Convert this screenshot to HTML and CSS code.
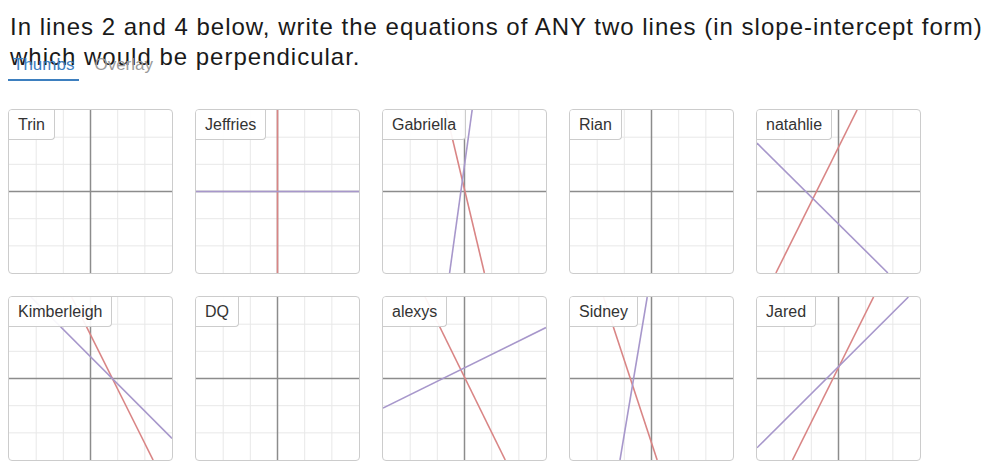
FILE: index.html
```html
<!DOCTYPE html>
<html>
<head>
<meta charset="utf-8">
<link rel="stylesheet" href="styles.css">
</head>
<body>
<svg class="defs" width="0" height="0" aria-hidden="true">
  <defs>
    <symbol id="grid" viewBox="0 0 164 164">
      <g class="gridlines">
        <line x1="27.33" y1="0" x2="27.33" y2="164"/>
        <line x1="54.67" y1="0" x2="54.67" y2="164"/>
        <line x1="109.33" y1="0" x2="109.33" y2="164"/>
        <line x1="136.67" y1="0" x2="136.67" y2="164"/>
        <line x1="0" y1="27.33" x2="164" y2="27.33"/>
        <line x1="0" y1="54.67" x2="164" y2="54.67"/>
        <line x1="0" y1="109.33" x2="164" y2="109.33"/>
        <line x1="0" y1="136.67" x2="164" y2="136.67"/>
      </g>
      <g class="axes">
        <line x1="82" y1="0" x2="82" y2="164"/>
        <line x1="0" y1="82" x2="164" y2="82"/>
      </g>
    </symbol>
  </defs>
</svg>

<div class="prompt">In lines 2 and 4 below, write the equations of ANY two lines (in slope-intercept form) which would be perpendicular.</div>

<div class="tabs">
  <span class="tab active">Thumbs</span>
  <span class="tab">Overlay</span>
</div>

<div class="cards">
  <div class="card">
    <svg class="plot" viewBox="0 0 164 164"><use href="#grid"/></svg>
    <div class="label">Trin</div>
  </div>
  <div class="card">
    <svg class="plot" viewBox="0 0 164 164"><use href="#grid"/>
      <line class="red" x1="82" y1="0" x2="82" y2="164"/>
      <line class="purple" x1="0" y1="82" x2="164" y2="82"/>
    </svg>
    <div class="label">Jeffries</div>
  </div>
  <div class="card">
    <svg class="plot" viewBox="0 0 164 164"><use href="#grid"/>
      <line class="red" x1="63" y1="0" x2="102" y2="164"/>
      <line class="purple" x1="89.7" y1="0" x2="67" y2="164"/>
    </svg>
    <div class="label">Gabriella</div>
  </div>
  <div class="card">
    <svg class="plot" viewBox="0 0 164 164"><use href="#grid"/></svg>
    <div class="label">Rian</div>
  </div>
  <div class="card">
    <svg class="plot" viewBox="0 0 164 164"><use href="#grid"/>
      <line class="red" x1="100.7" y1="0" x2="19" y2="164"/>
      <line class="purple" x1="0" y1="33.3" x2="131.7" y2="164"/>
    </svg>
    <div class="label">natahlie</div>
  </div>

  <div class="card">
    <svg class="plot" viewBox="0 0 164 164"><use href="#grid"/>
      <line class="red" x1="63" y1="0" x2="145" y2="164"/>
      <line class="purple" x1="22" y1="0" x2="164" y2="142.3"/>
    </svg>
    <div class="label">Kimberleigh</div>
  </div>
  <div class="card">
    <svg class="plot" viewBox="0 0 164 164"><use href="#grid"/></svg>
    <div class="label">DQ</div>
  </div>
  <div class="card">
    <svg class="plot" viewBox="0 0 164 164"><use href="#grid"/>
      <line class="red" x1="42.3" y1="0" x2="123" y2="164"/>
      <line class="purple" x1="0" y1="111.7" x2="164" y2="30.7"/>
    </svg>
    <div class="label">alexys</div>
  </div>
  <div class="card">
    <svg class="plot" viewBox="0 0 164 164"><use href="#grid"/>
      <line class="red" x1="33.7" y1="0" x2="87.7" y2="164"/>
      <line class="purple" x1="77.7" y1="0" x2="50.3" y2="164"/>
    </svg>
    <div class="label">Sidney</div>
  </div>
  <div class="card">
    <svg class="plot" viewBox="0 0 164 164"><use href="#grid"/>
      <line class="red" x1="117.3" y1="0" x2="35.7" y2="164"/>
      <line class="purple" x1="152.3" y1="0" x2="0" y2="151.7"/>
    </svg>
    <div class="label">Jared</div>
  </div>
</div>
</body>
</html>
```

FILE: styles.css
```css
html, body {
  background: #ffffff;
}

body {
  margin: 8px;
  font-family: "Liberation Sans", Arial, sans-serif;
  color: #222222;
}

.defs {
  position: absolute;
  width: 0;
  height: 0;
  overflow: hidden;
}

.prompt {
  font-size: 24px;
  line-height: 30px;
  letter-spacing: 1px;
  padding: 4px 0 0 2px;
  height: 43px;
  color: #1a1a1a;
}

.tabs {
  display: flex;
  gap: 10px;
}

.tab {
  font-size: 17px;
  line-height: 20px;
  padding: 0 5px 4px 5px;
  color: #9a9a9a;
  border-bottom: 2px solid transparent;
}

.tab.active {
  color: #3d80c2;
  border-bottom-color: #3d7fbf;
}

.cards {
  margin-top: 28px;
  display: grid;
  grid-template-columns: repeat(5, 165px);
  grid-auto-rows: 165px;
  column-gap: 22px;
  row-gap: 22px;
}

.card {
  position: relative;
  border: 1px solid #cccccc;
  border-radius: 4px;
  overflow: hidden;
  background: #ffffff;
}

.plot {
  display: block;
  width: 100%;
  height: 100%;
}

.gridlines line {
  stroke: #e8e8e8;
  stroke-width: 1;
}

.axes line {
  stroke: #8c8c8c;
  stroke-width: 1.5;
}

.red {
  stroke: #d98585;
  stroke-width: 1.6;
}

.purple {
  stroke: #a797cb;
  stroke-width: 1.6;
}

.label {
  position: absolute;
  top: 0;
  left: 0;
  font-size: 16px;
  line-height: 29px;
  padding: 0 9px;
  color: #333333;
  background: rgba(255, 255, 255, 0.92);
  border-right: 1px solid #cccccc;
  border-bottom: 1px solid #cccccc;
  border-bottom-right-radius: 4px;
}
```
